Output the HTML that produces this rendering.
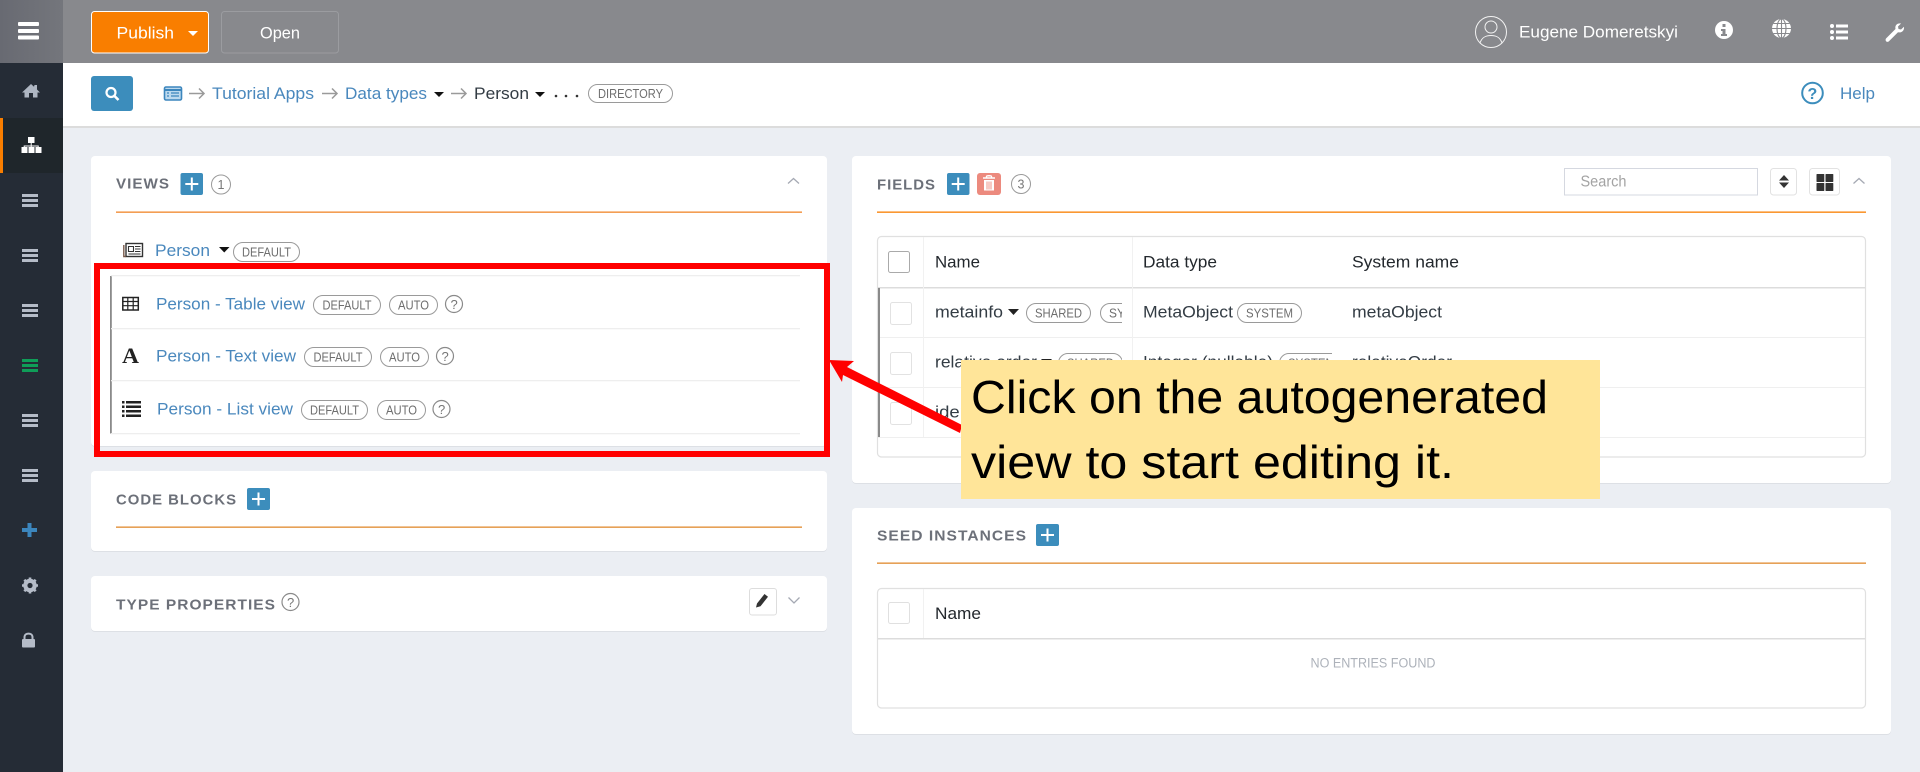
<!DOCTYPE html>
<html lang="en"><head><meta charset="utf-8"><title>Person - Data types</title>
<style>
html,body{margin:0;padding:0;width:1920px;height:772px;overflow:hidden;background:#ebeef3}
svg{display:block}
text{font-family:"Liberation Sans",sans-serif}
.n{font-size:17px;fill:#333c44}
.l{font-size:17px;fill:#4a88bd}
.p{font-size:12.5px;fill:#6e6e6e}
.h{font-size:15px;font-weight:bold;fill:#6c7079;letter-spacing:1px}
.th{font-size:17px;fill:#23282d}
.w{font-size:17px;fill:#fff}
.y{font-size:46px;fill:#000;font-family:"Liberation Sans",sans-serif}
</style></head><body>
<svg xmlns="http://www.w3.org/2000/svg" width="1920" height="772" viewBox="0 0 1920 772">
<defs><clipPath id="c1"><rect x="923" y="288" width="199" height="150"/></clipPath><clipPath id="c2"><rect x="1132" y="288" width="200" height="150"/></clipPath>
<linearGradient id="g" x1="0" y1="0" x2="1" y2="0"><stop offset="0" stop-color="#686a72"/><stop offset="1" stop-color="#74767c"/></linearGradient></defs>
<rect width="1920" height="772" fill="#ebeef3"/>

<!-- top bar -->
<rect x="63" y="0" width="1857" height="63" fill="#88898d"/>
<rect x="91.500" y="11.500" width="117" height="41.500" rx="3" fill="#f97e00" stroke="#fff"/>
<text class="w" x="116.500" y="38.500" textLength="57.500" lengthAdjust="spacingAndGlyphs">Publish</text>
<path d="M188 31h10l-5 5z" fill="#fff"/>
<rect x="221.500" y="11.500" width="117" height="41.500" rx="3" fill="none" stroke="#9b9ca0"/>
<text class="w" x="260" y="38.500" textLength="40" lengthAdjust="spacingAndGlyphs">Open</text>

<circle cx="1491" cy="32" r="15.500" fill="none" stroke="#f2f2f2" stroke-width="1"/>
<circle cx="1491" cy="27" r="6" fill="none" stroke="#f2f2f2"/>
<path d="M1480 43c2-6 6-7.500 11-7.500s9 1.500 11 7.500" fill="none" stroke="#f2f2f2"/>
<text class="w" x="1519" y="37.500" textLength="159" lengthAdjust="spacingAndGlyphs">Eugene Domeretskyi</text>
<!-- info -->
<circle cx="1724" cy="30" r="9" fill="#fff"/>
<rect x="1722.500" y="24" width="3" height="3" fill="#88898d"/><path d="M1721 29h4.500v5h1.500v2h-6v-2h1.500v-3h-1.500z" fill="#88898d"/>
<!-- globe -->
<circle cx="1781.500" cy="28.500" r="9.500" fill="#fff"/>
<g fill="none" stroke="#88898d" stroke-width="1.100"><ellipse cx="1781.500" cy="28.500" rx="4.500" ry="9.500"/><path d="M1781.500 19v19M1772 28.500h19M1773.500 23.500h16M1773.500 33.500h16"/></g>
<!-- list -->
<g fill="#fff"><circle cx="1832" cy="26" r="2"/><circle cx="1832" cy="32" r="2"/><circle cx="1832" cy="38" r="2"/><rect x="1836" y="24.500" width="12" height="3"/><rect x="1836" y="30.500" width="12" height="3"/><rect x="1836" y="36.500" width="12" height="3"/></g>
<!-- wrench -->
<path d="M1886 38.500l9.500-9.500c-.8-3.500 1.500-6 5.500-5.500l-3 3 .5 2.500 2.500.5 3-2.800c.5 4-2.500 6.500-6 5.500l-9.300 9.300c-2 1.300-4-1-2.700-3z" fill="#fff"/>

<!-- breadcrumb bar -->
<rect x="63" y="63" width="1857" height="63" fill="#fff"/>
<rect x="63" y="126" width="1857" height="2" fill="#dcdcdc"/>
<rect x="91" y="76" width="42" height="35" rx="3" fill="#3c8dbc"/>
<circle cx="111" cy="92.500" r="4.500" fill="none" stroke="#fff" stroke-width="2.200"/><path d="M114.500 96l4 4" stroke="#fff" stroke-width="2.600"/>
<rect x="164.500" y="87" width="17" height="13" rx="1.500" fill="#bcd9ee" stroke="#3c86bd" stroke-width="1.600"/>
<path d="M164.500 90h17" stroke="#3c86bd" stroke-width="2"/><path d="M167 93h2M171 93h8M167 96h2M171 96h8" stroke="#3c86bd" stroke-width="1.200"/>
<g fill="none" stroke="#9a9a9a" stroke-width="1.500"><path d="M189 93.500h15M199 88.500l5 5-5 5"/><path d="M322 93.500h15M332 88.500l5 5-5 5"/><path d="M451 93.500h15M461 88.500l5 5-5 5"/></g>
<text class="l" x="212" y="99" textLength="102" lengthAdjust="spacingAndGlyphs">Tutorial Apps</text>
<text class="l" x="345" y="99" textLength="82" lengthAdjust="spacingAndGlyphs">Data types</text>
<path d="M434 92h10l-5 5z" fill="#111"/>
<text class="n" x="474" y="99" textLength="55" lengthAdjust="spacingAndGlyphs">Person</text>
<path d="M535 92h10l-5 5z" fill="#111"/>
<circle cx="556" cy="96" r="1.300" fill="#333"/><circle cx="566" cy="96" r="1.300" fill="#333"/><circle cx="577" cy="96" r="1.300" fill="#333"/>
<rect x="588.500" y="84.500" width="84" height="18" rx="9" fill="#fff" stroke="#9a9a9a"/>
<text class="p" x="598" y="98" textLength="65" lengthAdjust="spacingAndGlyphs">DIRECTORY</text>
<circle cx="1812.500" cy="93" r="10.300" fill="none" stroke="#3c8dbc" stroke-width="2"/>
<text x="1807.500" y="99" font-size="16" font-weight="bold" fill="#3c8dbc">?</text>
<text class="l" x="1840" y="99" textLength="35" lengthAdjust="spacingAndGlyphs">Help</text>

<!-- sidebar -->
<rect x="0" y="0" width="63" height="772" fill="#252c36"/>
<rect x="0" y="0" width="63" height="63" fill="url(#g)"/>
<g fill="#fff"><rect x="18" y="22" width="21" height="4" rx="1"/><rect x="18" y="29" width="21" height="4" rx="1"/><rect x="18" y="35.500" width="21" height="4" rx="1"/></g>
<path d="M34.500 85h2.500v4.500l3 3h-2.500v5h-4.500v-4.500h-4v4.500h-4.500v-5h-2.500l9-8.500 3 2.700z" fill="#aeb6c2"/>
<rect x="0" y="118" width="63" height="55" fill="#1f262b"/>
<rect x="0" y="118" width="3" height="55" fill="#f97e00"/>
<g fill="#fff"><rect x="28" y="137" width="6.500" height="6"/><rect x="21.500" y="147" width="6" height="6"/><rect x="28.500" y="147" width="6" height="6"/><rect x="35.500" y="147" width="6" height="6"/><path d="M30.700 143h1v2.500h7v1.500h-1v-.5h-6v.5h-1v-.5h-6v.5h-1v-1.500h7z"/></g>
<g fill="#b5bcc8">
<rect x="22" y="194" width="16" height="3"/><rect x="22" y="199" width="16" height="3"/><rect x="22" y="204" width="16" height="3"/>
<rect x="22" y="249" width="16" height="3"/><rect x="22" y="254" width="16" height="3"/><rect x="22" y="259" width="16" height="3"/>
<rect x="22" y="304" width="16" height="3"/><rect x="22" y="309" width="16" height="3"/><rect x="22" y="314" width="16" height="3"/>
<rect x="22" y="414" width="16" height="3"/><rect x="22" y="419" width="16" height="3"/><rect x="22" y="424" width="16" height="3"/>
<rect x="22" y="469" width="16" height="3"/><rect x="22" y="474" width="16" height="3"/><rect x="22" y="479" width="16" height="3"/>
</g>
<g fill="#0f9d58"><rect x="22" y="359" width="16" height="3"/><rect x="22" y="364" width="16" height="3"/><rect x="22" y="369" width="16" height="3"/></g>
<path d="M27.500 523h4v5h5.500v4h-5.500v5h-4v-5h-5.500v-4h5.500z" fill="#3c86bd"/>
<circle cx="30" cy="585.500" r="5" fill="none" stroke="#b5bcc8" stroke-width="3.500"/>
<path d="M30 577.500v16M22 585.500h16M24.300 579.800l11.400 11.400M35.700 579.800l-11.400 11.400" stroke="#b5bcc8" stroke-width="2.600"/>
<circle cx="30" cy="585.500" r="2.600" fill="#252c36"/>
<rect x="22" y="639" width="13" height="8.500" rx="1" fill="#b5bcc8"/>
<path d="M24.500 639v-2c0-4.500 8-4.500 8 0v2" fill="none" stroke="#b5bcc8" stroke-width="2"/>

<!-- VIEWS card -->
<rect x="91" y="157" width="736" height="290" rx="4" fill="#dde0e5"/>
<rect x="91" y="156" width="736" height="290" rx="4" fill="#fff"/>
<text class="h" x="116" y="188.500" textLength="54" lengthAdjust="spacingAndGlyphs">VIEWS</text>
<rect x="180.500" y="173" width="22.500" height="22" rx="2" fill="#3c8dbc"/><path d="M191.800 177.500v13M185.300 184h13" stroke="#fff" stroke-width="2"/>
<circle cx="221" cy="184.500" r="9.500" fill="none" stroke="#9a9a9a"/>
<text x="217.500" y="189" font-size="12.500" fill="#777">1</text>
<rect x="116" y="211.500" width="686" height="1.300" fill="#f0862a"/>
<path d="M788 183.500l5.500-5 5.500 5" fill="none" stroke="#a5a9b3" stroke-width="1.300"/>

<rect x="126" y="243.500" width="16.500" height="13" fill="#fff" stroke="#333" stroke-width="1.400"/>
<path d="M123.800 245v11.500h2" fill="none" stroke="#7a5a4a" stroke-width="1.400"/>
<path d="M128.500 246.500h5v5h-5zM135 246.500h5.500M135 249h5.500M135 251.500h5.500M128.500 254h12" fill="none" stroke="#333" stroke-width="1.100"/>
<text class="l" x="155" y="256" textLength="55" lengthAdjust="spacingAndGlyphs">Person</text>
<path d="M219 247h10.500l-5.250 5.500z" fill="#111"/>
<rect x="233.500" y="242.500" width="66" height="19" rx="9.500" fill="#fff" stroke="#9a9a9a"/>
<text class="p" x="242" y="256.500" textLength="49" lengthAdjust="spacingAndGlyphs">DEFAULT</text>

<!-- view rows -->
<rect x="110" y="276" width="1.800" height="157.500" fill="#8a8a8a"/>
<g fill="#eeeeee"><rect x="111" y="275" width="689" height="1.300"/><rect x="111" y="328" width="689" height="1.300"/><rect x="111" y="380" width="689" height="1.300"/><rect x="111" y="433" width="689" height="1.300"/></g>

<rect x="122.800" y="297.500" width="15.500" height="12.500" fill="none" stroke="#222" stroke-width="1.500"/>
<path d="M122.500 301.500h16M122.500 305.700h16M127.800 297v13M133.200 297v13" stroke="#222" stroke-width="1.200"/>
<text class="l" x="156" y="309.500" textLength="149" lengthAdjust="spacingAndGlyphs">Person - Table view</text>
<rect x="313.500" y="295.500" width="67" height="19" rx="9.500" fill="#fff" stroke="#9a9a9a"/><text class="p" x="322.500" y="309.500" textLength="49" lengthAdjust="spacingAndGlyphs">DEFAULT</text>
<rect x="389.500" y="295.500" width="48" height="19" rx="9.500" fill="#fff" stroke="#9a9a9a"/><text class="p" x="398" y="309.500" textLength="31" lengthAdjust="spacingAndGlyphs">AUTO</text>
<ellipse cx="454" cy="304" rx="8.500" ry="8.500" fill="none" stroke="#8a8a8a" stroke-width="1.200"/><text x="450.500" y="309" font-size="13" fill="#777">?</text>

<text x="122" y="363" font-size="22" font-weight="bold" fill="#222" textLength="17" lengthAdjust="spacingAndGlyphs" style="font-family:'Liberation Serif',serif">A</text>
<text class="l" x="156" y="361.500" textLength="140" lengthAdjust="spacingAndGlyphs">Person - Text view</text>
<rect x="304.500" y="347.500" width="67" height="19" rx="9.500" fill="#fff" stroke="#9a9a9a"/><text class="p" x="313.500" y="361.500" textLength="49" lengthAdjust="spacingAndGlyphs">DEFAULT</text>
<rect x="380.500" y="347.500" width="48" height="19" rx="9.500" fill="#fff" stroke="#9a9a9a"/><text class="p" x="389" y="361.500" textLength="31" lengthAdjust="spacingAndGlyphs">AUTO</text>
<ellipse cx="445" cy="356" rx="8.500" ry="8.500" fill="none" stroke="#8a8a8a" stroke-width="1.200"/><text x="441.500" y="361" font-size="13" fill="#777">?</text>

<g fill="#222"><rect x="122" y="401" width="2.500" height="2.500"/><rect x="122" y="405.500" width="2.500" height="2.500"/><rect x="122" y="410" width="2.500" height="2.500"/><rect x="122" y="414.500" width="2.500" height="2.500"/><rect x="126" y="401" width="15" height="2.500"/><rect x="126" y="405.500" width="15" height="2.500"/><rect x="126" y="410" width="15" height="2.500"/><rect x="126" y="414.500" width="15" height="2.500"/></g>
<text class="l" x="157" y="414.500" textLength="136" lengthAdjust="spacingAndGlyphs">Person - List view</text>
<rect x="301.500" y="400.500" width="66" height="19" rx="9.500" fill="#fff" stroke="#9a9a9a"/><text class="p" x="310" y="414.500" textLength="49" lengthAdjust="spacingAndGlyphs">DEFAULT</text>
<rect x="377.500" y="400.500" width="48" height="19" rx="9.500" fill="#fff" stroke="#9a9a9a"/><text class="p" x="386" y="414.500" textLength="31" lengthAdjust="spacingAndGlyphs">AUTO</text>
<ellipse cx="441.500" cy="409" rx="8.500" ry="8.500" fill="none" stroke="#8a8a8a" stroke-width="1.200"/><text x="438" y="414" font-size="13" fill="#777">?</text>

<!-- CODE BLOCKS -->
<rect x="91" y="472" width="736" height="80" rx="4" fill="#dde0e5"/>
<rect x="91" y="471" width="736" height="80" rx="4" fill="#fff"/>
<text class="h" x="116" y="504.500" textLength="121" lengthAdjust="spacingAndGlyphs">CODE BLOCKS</text>
<rect x="247" y="488" width="23" height="22" rx="2" fill="#3c8dbc"/><path d="M258.500 492.500v13M252 499h13" stroke="#fff" stroke-width="2"/>
<rect x="116" y="526.500" width="686" height="1.300" fill="#e08a2e"/>

<!-- TYPE PROPERTIES -->
<rect x="91" y="577" width="736" height="55" rx="4" fill="#dde0e5"/>
<rect x="91" y="576" width="736" height="55" rx="4" fill="#fff"/>
<text class="h" x="116" y="609.500" textLength="160" lengthAdjust="spacingAndGlyphs">TYPE PROPERTIES</text>
<circle cx="290.500" cy="602" r="8.500" fill="none" stroke="#8a8a8a" stroke-width="1.200"/><text x="287" y="607" font-size="13" fill="#777">?</text>
<rect x="749.500" y="588.500" width="27" height="26.500" rx="2.500" fill="#fff" stroke="#ddd"/>
<path d="M756 607.500l1-4 7.500-9.500 3.500 2.800-7.500 9.500z" fill="#333"/>
<path d="M788.500 597.500l5.500 5.500 5.500-5.500" fill="none" stroke="#a5a9b3" stroke-width="1.300"/>

<!-- FIELDS card -->
<rect x="852" y="157" width="1039" height="327" rx="4" fill="#dde0e5"/>
<rect x="852" y="156" width="1039" height="327" rx="4" fill="#fff"/>
<text class="h" x="877" y="189.500" textLength="59" lengthAdjust="spacingAndGlyphs">FIELDS</text>
<rect x="947" y="173" width="22.500" height="22" rx="2" fill="#3c8dbc"/><path d="M958.200 177.500v13M951.700 184h13" stroke="#fff" stroke-width="2"/>
<rect x="977" y="173" width="24" height="22" rx="3" fill="#ec8a7e"/>
<path d="M983 178h12M986.500 178v-1.500c0-1 5-1 5 0v1.500" fill="none" stroke="#fff" stroke-width="1.400"/>
<path d="M984 180h10v10.500h-10z" fill="#fff"/><path d="M987 181.500v8M989 181.500v8M991 181.500v8" stroke="#ec8a7e" stroke-width=".9"/>
<circle cx="1021" cy="184" r="9.500" fill="none" stroke="#9a9a9a"/>
<text x="1017.500" y="188.500" font-size="12.500" fill="#777">3</text>
<rect x="877" y="211.500" width="989" height="1.300" fill="#f97e00"/>
<rect x="1564.500" y="168.500" width="193" height="26.500" fill="#fff" stroke="#d5d8e0"/>
<text x="1580.500" y="186.500" font-size="15.500" fill="#a3a3a3" textLength="46" lengthAdjust="spacingAndGlyphs">Search</text>
<rect x="1770.500" y="168.500" width="26" height="26.500" rx="3" fill="#fff" stroke="#e2e2e2"/>
<path d="M1779 180.500l5-5.500 5 5.500zM1779 182.500h10l-5 5.500z" fill="#333"/>
<rect x="1809.500" y="168.500" width="30" height="26.500" rx="3" fill="#fff" stroke="#e2e2e2"/>
<g fill="#333"><rect x="1816.500" y="174" width="7.800" height="8" rx=".6"/><rect x="1825.500" y="174" width="7.800" height="8" rx=".6"/><rect x="1816.500" y="183" width="7.800" height="8" rx=".6"/><rect x="1825.500" y="183" width="7.800" height="8" rx=".6"/></g>
<path d="M1853.500 183.500l5.500-5 5.500 5" fill="none" stroke="#a5a9b3" stroke-width="1.300"/>

<rect x="877.500" y="236.500" width="988" height="220.500" rx="4" fill="#fff" stroke="#e0e0e0" stroke-width="1.200"/>
<rect x="878" y="287" width="987" height="1.500" fill="#dcdcdc"/>
<rect x="878" y="337" width="987" height="1" fill="#efefef"/><rect x="878" y="387" width="987" height="1" fill="#efefef"/><rect x="878" y="437" width="987" height="1" fill="#efefef"/>
<rect x="923" y="237" width="1" height="200" fill="#f1f1f1"/>
<rect x="1132" y="237" width="1" height="200" fill="#f1f1f1"/>
<rect x="878" y="288" width="2" height="149" fill="#8a8a8a"/>
<rect x="888.500" y="251.500" width="21" height="21" rx="2" fill="#fff" stroke="#aaa"/>
<text class="th" x="935" y="267.500" textLength="45" lengthAdjust="spacingAndGlyphs">Name</text>
<text class="th" x="1143" y="267.500" textLength="74" lengthAdjust="spacingAndGlyphs">Data type</text>
<text class="th" x="1352" y="267.500" textLength="107" lengthAdjust="spacingAndGlyphs">System name</text>

<rect x="890.500" y="302.500" width="21" height="22" rx="2" fill="#fff" stroke="#e2e2e2"/>
<text class="n" x="935" y="317.500" textLength="68" lengthAdjust="spacingAndGlyphs">metainfo</text>
<path d="M1008 309h11l-5.500 6z" fill="#222"/>
<g clip-path="url(#c1)">
<rect x="1026.500" y="303.500" width="64" height="19" rx="9.500" fill="#fff" stroke="#9a9a9a"/><text class="p" x="1035" y="317.500" textLength="47" lengthAdjust="spacingAndGlyphs">SHARED</text>
<rect x="1100.500" y="303.500" width="66" height="19" rx="9.500" fill="#fff" stroke="#9a9a9a"/><text class="p" x="1109" y="317.500" textLength="49" lengthAdjust="spacingAndGlyphs">SYSTEM</text>
</g>
<text class="n" x="1143" y="317.500" textLength="90" lengthAdjust="spacingAndGlyphs">MetaObject</text>
<rect x="1237.500" y="303.500" width="64" height="19" rx="9.500" fill="#fff" stroke="#9a9a9a"/><text class="p" x="1246" y="317.500" textLength="47" lengthAdjust="spacingAndGlyphs">SYSTEM</text>
<text class="n" x="1352" y="317.500" textLength="90" lengthAdjust="spacingAndGlyphs">metaObject</text>

<rect x="890.500" y="352.500" width="21" height="22" rx="2" fill="#fff" stroke="#e2e2e2"/>
<text class="n" x="935" y="367.500" textLength="102" lengthAdjust="spacingAndGlyphs">relative order</text>
<path d="M1041 359h11l-5.500 6z" fill="#222"/>
<g clip-path="url(#c1)"><rect x="1058.500" y="353.500" width="64" height="19" rx="9.500" fill="#fff" stroke="#9a9a9a"/><text class="p" x="1067" y="367.500" textLength="47" lengthAdjust="spacingAndGlyphs">SHARED</text></g>
<text class="n" x="1143" y="367.500" textLength="130" lengthAdjust="spacingAndGlyphs">Integer (nullable)</text>
<g clip-path="url(#c2)"><rect x="1279.500" y="353.500" width="64" height="19" rx="9.500" fill="#fff" stroke="#9a9a9a"/><text class="p" x="1288" y="367.500" textLength="47" lengthAdjust="spacingAndGlyphs">SYSTEM</text></g>
<text class="n" x="1352" y="367.500" textLength="100" lengthAdjust="spacingAndGlyphs">relativeOrder</text>

<rect x="890.500" y="402.500" width="21" height="22" rx="2" fill="#fff" stroke="#e2e2e2"/>
<text class="n" x="935" y="417.500" textLength="70" lengthAdjust="spacingAndGlyphs">identifier</text>

<!-- SEED INSTANCES -->
<rect x="852" y="509" width="1039" height="226" rx="4" fill="#dde0e5"/>
<rect x="852" y="508" width="1039" height="226" rx="4" fill="#fff"/>
<text class="h" x="877" y="540.500" textLength="150" lengthAdjust="spacingAndGlyphs">SEED INSTANCES</text>
<rect x="1036" y="524" width="23" height="22" rx="2" fill="#3c8dbc"/><path d="M1047.500 528.500v13M1041 535h13" stroke="#fff" stroke-width="2"/>
<rect x="877" y="562.500" width="989" height="1.300" fill="#e08a2e"/>
<rect x="877.500" y="588.500" width="988" height="119.500" rx="4" fill="#fff" stroke="#e0e0e0" stroke-width="1.200"/>
<rect x="878" y="638" width="987" height="1.500" fill="#dcdcdc"/>
<rect x="923" y="589" width="1" height="49" fill="#f1f1f1"/>
<rect x="888.500" y="602.500" width="21" height="21" rx="2" fill="#fff" stroke="#e0e0e0"/>
<text class="th" x="935" y="619" textLength="46" lengthAdjust="spacingAndGlyphs">Name</text>
<text x="1310.500" y="667.500" font-size="13.500" fill="#adb2ba" textLength="125" lengthAdjust="spacingAndGlyphs">NO ENTRIES FOUND</text>

<!-- annotation -->
<rect x="97" y="266" width="730" height="188" fill="none" stroke="#f00" stroke-width="6"/>
<path d="M829 360L854 361L847 367L962 425L960 433L843 375L842 382z" fill="#f00"/>
<rect x="961" y="360" width="639" height="139" fill="#ffe599"/>
<text class="y" x="971" y="413" textLength="577" lengthAdjust="spacingAndGlyphs">Click on the autogenerated</text>
<text class="y" x="971" y="478" textLength="483" lengthAdjust="spacingAndGlyphs">view to start editing it.</text>
</svg>
</body></html>
